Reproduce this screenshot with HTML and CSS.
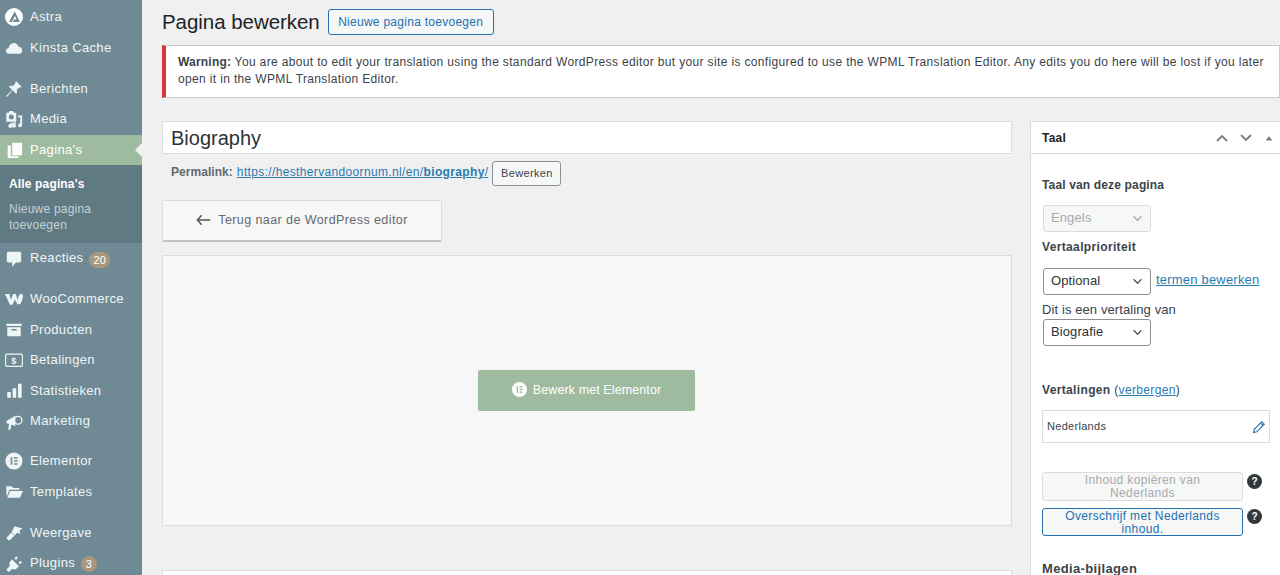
FILE: index.html
```html
<!DOCTYPE html>
<html lang="nl">
<head>
<meta charset="utf-8">
<title>Pagina bewerken</title>
<link rel="stylesheet" href="styles.css">
</head>
<body>
<div class="app">
  <nav class="sidebar">
    <a class="item"><svg class="ic" viewBox="0 0 20 20"><circle cx="10" cy="10" r="10" fill="#fff"/><path d="M10.800 3.500 4.500 15.500h3.200l3.300-6.500 1.800 3.800H10l-1.300 2.700h7.800z" fill="#6f8a94"/></svg><span>Astra</span></a>
    <a class="item"><svg class="ic" viewBox="0 0 20 20"><path d="M4.500 16.500C2 16.500 1 14.800 1 13.300c0-1.800 1.300-3 3-3.300C4.600 7 6.800 4.500 9.800 4.500c2.500 0 4.500 1.600 5.200 4 2.400 0 4.200 1.900 4.200 4.200 0 2.200-1.500 3.800-3.500 3.800z" fill="#eef5f7"/></svg><span>Kinsta Cache</span></a>
    <div class="sep"></div>
    <a class="item"><svg class="ic" viewBox="0 0 20 20"><path d="M12.500 1.500l6 6-1.500 1-1-.5-3 3c.5 2 .2 3.200-.5 4.500L8.500 11.500 2.500 18.500l-1 0 0-1 6.500-6.500-3.800-3.800c1.300-.8 2.800-1 4.500-.5l3-3-.5-1z" fill="#eef5f7"/></svg><span>Berichten</span></a>
    <a class="item"><svg class="ic" viewBox="0 0 20 20"><path d="M1.500 3h2.500l1-2h4l1 2h2.500v10h-11z M7 5a2.800 2.800 0 1 0 .01 0z" fill="#eef5f7" fill-rule="evenodd"/><path d="M14.500 6h4.500v11a2.200 2.200 0 1 1-2-2.200V8h-2.500zM6 14.500l6-1v4a2.200 2.200 0 1 1-2-2.200v-.300l-2 .300v2.500a2.200 2.200 0 1 1-2-2.200z" fill="#eef5f7"/></svg><span>Media</span></a>
    <a class="item active"><svg class="ic" viewBox="0 0 20 20"><path d="M8 2h11v14H8z" fill="#fff"/><path d="M3 5h3.500v12H15v2H3z" fill="#fff"/></svg><span>Pagina's</span></a>
    <div class="submenu">
      <a class="sub current">Alle pagina's</a>
      <a class="sub">Nieuwe pagina toevoegen</a>
    </div>
    <a class="item"><svg class="ic" viewBox="0 0 20 20"><path d="M4 2h12a2 2 0 0 1 2 2v8a2 2 0 0 1-2 2h-4l-4 5v-5H4a2 2 0 0 1-2-2V4a2 2 0 0 1 2-2z" fill="#eef5f7"/></svg><span>Reacties</span><b class="badge wide">20</b></a>
    <div class="sep short"></div>
    <a class="item"><svg class="ic" viewBox="0 0 20 20"><path d="M0 4.500h5l1.500 6.500L9 4.500h3l2 6.500 1-3.500c.6-2 1.700-3.200 3-3.200 1.400 0 2 1 2 2.500 0 2.500-1.700 7.500-3.200 9h-3L11 10.500l-2.500 5.800H5.500z" fill="#eef5f7"/></svg><span>WooCommerce</span></a>
    <a class="item"><svg class="ic" viewBox="0 0 20 20"><path d="M1.500 3h17v2.500h-17zM2.500 7h15v10h-15z M7 9v1.500h6V9z" fill="#eef5f7" fill-rule="evenodd"/></svg><span>Producten</span></a>
    <a class="item"><svg class="ic" viewBox="0 0 20 20"><rect x=".7" y="3.500" width="18.600" height="13.500" rx="1" fill="none" stroke="#eef5f7" stroke-width="1.300"/><text class="dollar" x="10" y="14.300" text-anchor="middle">$</text></svg><span>Betalingen</span></a>
    <a class="item"><svg class="ic" viewBox="0 0 20 20"><path d="M2.500 11h4v6.500h-4zM8.500 7h4v10.500h-4zM14.500 2h4v15.500h-4z" fill="#eef5f7"/></svg><span>Statistieken</span></a>
    <a class="item"><svg class="ic" viewBox="0 0 20 20"><path d="M1.500 9l10-6v11.500l-4.500-1.500-1 5.500H3.500l1-6.300-3-1z" fill="#eef5f7"/><circle cx="14.500" cy="8" r="4.300" fill="none" stroke="#eef5f7" stroke-width="1.500"/></svg><span>Marketing</span></a>
    <div class="sep tight"></div>
    <a class="item"><svg class="ic" viewBox="0 0 20 20"><circle cx="10" cy="10" r="9.500" fill="#eef5f7"/><path d="M6.300 5.800h1.800v8.400H6.300zM10 5.800h4v1.700h-4zM10 9.200h4v1.700h-4zM10 12.500h4v1.700h-4z" fill="#6f8a94"/></svg><span>Elementor</span></a>
    <a class="item"><svg class="ic" viewBox="0 0 20 20"><path d="M1.500 3.500h6l1.500 2h7v2H5L2.500 14h-1zM5.800 9H20l-3.500 7.500H2.500z" fill="#eef5f7"/></svg><span>Templates</span></a>
    <div class="sep"></div>
    <a class="item"><svg class="ic" viewBox="0 0 20 20"><path d="M10.500 2.500l9 2.500-3.500 2.500 1 3.500-3.500-1.200-2.500 3-3.500-3.500z M7 9.500l3.500 3.500-6 5.500L1.500 15.500z" fill="#eef5f7"/></svg><span>Weergave</span></a>
    <a class="item"><svg class="ic" viewBox="0 0 20 20"><path d="M8 5l7.500 7.500-2.500 2.500c-1.500 1.300-3.500 1.300-5 .5L4 19l-2.500-2.500 4-4.500c-.8-1.500-.6-3.500.5-5zM10.500 4l2-2.500 1.700 1.500-2 2.500zM15 8.500l2.500-2 1.500 1.700-2.500 2z" fill="#eef5f7"/></svg><span>Plugins</span><b class="badge">3</b></a>
  </nav>

  <main class="content">
    <header class="page-head">
      <h1>Pagina bewerken</h1>
      <a class="btn-add">Nieuwe pagina toevoegen</a>
    </header>
    <div class="notice">
      <p><strong>Warning:</strong> You are about to edit your translation using the standard WordPress editor but your site is configured to use the WPML Translation Editor. Any edits you do here will be lost if you later open it in the WPML Translation Editor.</p>
    </div>
    <div class="columns">
      <section class="editor">
        <div class="title-input">Biography</div>
        <div class="permalink">
          <strong>Permalink:</strong>
          <a class="link">https://hesthervandoornum.nl/en/<b>biography</b>/</a>
          <span class="btn-small">Bewerken</span>
        </div>
        <a class="btn-back"><svg class="arrow" viewBox="0 0 16 12"><path d="M6 1 1.500 6 6 11M1.500 6H15" fill="none" stroke="#50575e" stroke-width="1.600"/></svg>Terug naar de WordPress editor</a>
        <div class="elementor-panel">
          <a class="btn-elementor"><svg class="el-ic" viewBox="0 0 20 20"><circle cx="10" cy="10" r="10" fill="#fff"/><path d="M6.200 5.500h1.800v9H6.200zM10 5.500h4v1.700h-4zM10 9.100h4v1.800h-4zM10 12.800h4v1.700h-4z" fill="#9fbb9f"/></svg>Bewerk met Elementor</a>
        </div>
        <div class="next-box"></div>
      </section>

      <aside class="side">
        <div class="side-head">
          <h2>Taal</h2>
          <svg class="ctl" viewBox="0 0 14 14"><path d="M2 10l5-5 5 5" fill="none" stroke="#787c82" stroke-width="1.800"/></svg>
          <svg class="ctl" viewBox="0 0 14 14"><path d="M2 4l5 5 5-5" fill="none" stroke="#787c82" stroke-width="1.800"/></svg>
          <svg class="ctl small" viewBox="0 0 14 14"><path d="M3 10l4-5 4 5z" fill="#787c82"/></svg>
        </div>
        <div class="side-body">
          <p class="lab first">Taal van deze pagina</p>
          <div class="select disabled">Engels<svg class="chev" viewBox="0 0 12 8"><path d="M1.500 1.500 6 6l4.500-4.500" fill="none" stroke="#a7aaad" stroke-width="1.500"/></svg></div>
          <p class="lab second">Vertaalprioriteit</p>
          <div class="row">
            <div class="select">Optional<svg class="chev" viewBox="0 0 12 8"><path d="M1.500 1.500 6 6l4.500-4.500" fill="none" stroke="#50575e" stroke-width="1.500"/></svg></div>
            <a class="link terms">termen bewerken</a>
          </div>
          <p class="plain">Dit is een vertaling van</p>
          <div class="select">Biografie<svg class="chev" viewBox="0 0 12 8"><path d="M1.500 1.500 6 6l4.500-4.500" fill="none" stroke="#50575e" stroke-width="1.500"/></svg></div>
          <p class="lab trans"><strong>Vertalingen</strong> (<a class="link">verbergen</a>)</p>
          <div class="lang-box">Nederlands<svg class="pencil" viewBox="0 0 14 14"><path d="M1.500 12.500l.7-3.200L9.800 1.700l2.500 2.500-7.600 7.600zM8.500 3l2.500 2.500" fill="none" stroke="#2271b1" stroke-width="1.100"/></svg></div>
          <div class="act first-act"><div class="btn-wide off">Inhoud kopiëren van Nederlands</div><span class="help">?</span></div>
          <div class="act"><div class="btn-wide on">Overschrijf met Nederlands inhoud.</div><span class="help">?</span></div>
          <p class="lab media">Media-bijlagen</p>
        </div>
      </aside>
    </div>
  </main>
</div>
</body>
</html>
```
FILE: styles.css
```css
* { box-sizing: border-box; }
html, body { margin: 0; height: 575px; overflow: hidden; }
body {
  background: #f0f0f0;
  color: #3c434a;
  font: 13px/1.4 "Liberation Sans", Arial, sans-serif;
  letter-spacing: .35px;
}
p, h1, h2 { margin: 0; }
.app { display: flex; height: 575px; overflow: hidden; }

/* sidebar */
.sidebar {
  flex: 0 0 142px;
  background: #6f8a94;
  color: #f0f5f7;
  padding-top: 2px;
  overflow: hidden;
}
.item {
  position: relative;
  display: flex;
  align-items: center;
  height: 30.600px;
  padding-left: 5px;
  font-size: 13px;
  white-space: nowrap;
}
.ic { width: 18px; height: 18px; flex: none; margin-right: 7px; }
.sep { height: 10.300px; }
.sep.short { height: 10px; }
.sep.tight { height: 9.300px; }
.item.active { background: #9fbb9f; color: #fff; }
.item.active::after {
  content: "";
  position: absolute;
  right: 0;
  top: 8px;
  border: 7px solid transparent;
  border-right-color: #f0f0f0;
  border-left-width: 0;
}
.submenu { background: #5f7a82; padding: 11px 0 10px; height: 78px; }
.sub { display: block; padding: 0 9px; font-size: 12px; line-height: 16px; color: #c5d2d6; letter-spacing: .22px; }
.sub.current { color: #fff; font-weight: 700; margin-bottom: 9px; letter-spacing: .15px; }
.badge {
  display: inline-block;
  min-width: 16px;
  height: 16px;
  margin-left: 6px;
  padding: 0 4px;
  border-radius: 8px;
  background: #a8977f;
  color: #fff;
  font: 400 11px/16px "Liberation Sans", Arial, sans-serif;
  text-align: center;
}
.badge.wide { margin-top: 2px; }
.dollar { font: 700 10px "Liberation Sans", Arial, sans-serif; fill: #eef5f7; }

/* main */
.content { flex: 1; min-width: 0; padding-left: 20px; }
.page-head { display: flex; align-items: center; height: 45px; }
h1 { font-size: 20.500px; font-weight: 400; color: #1d2327; letter-spacing: -.05px; margin-right: 8px; }
.btn-add {
  display: flex;
  align-items: center;
  justify-content: center;
  width: 166px;
  height: 26px;
  border: 1px solid #2271b1;
  border-radius: 3px;
  background: #f6f7f7;
  color: #2271b1;
  font-size: 12px;
  letter-spacing: .27px;
  margin-bottom: 1px;
}
.notice {
  height: 53px;
  background: #fff;
  border: 1px solid #c9cccf;
  border-left: 4px solid #d63638;
  padding: 8px 6px 0 12px;
  font-size: 12px;
  line-height: 17px;
  letter-spacing: .35px;
}
.notice strong { letter-spacing: .2px; }
.columns { display: flex; margin-top: 23px; gap: 18px; }
.editor { flex: 0 0 850px; }
.title-input {
  height: 33px;
  background: #fff;
  border: 1px solid #dcdcde;
  padding: 1px 8px 0;
  font-size: 20px;
  line-height: 31px;
  color: #2c3338;
  letter-spacing: 0;
}
.permalink {
  display: flex;
  align-items: flex-start;
  height: 25px;
  margin-top: 7px;
  padding-left: 9px;
  font-size: 12px;
  line-height: 22px;
  color: #646970;
}
.permalink strong { margin-right: 4px; letter-spacing: .05px; }
.link { color: #2a7bb0; text-decoration: underline; }
.btn-small {
  margin-left: 4px;
  width: 69px;
  height: 25px;
  border: 1px solid #8c9196;
  border-radius: 3px;
  background: #f6f7f7;
  color: #3c434a;
  font-size: 11px;
  line-height: 23px;
  text-align: center;
}
.btn-back {
  display: flex;
  align-items: center;
  justify-content: center;
  width: 280px;
  height: 42px;
  margin-top: 14px;
  padding-top: 1px;
  background: #f7f7f7;
  border: 1px solid #dcdcde;
  border-bottom: 2px solid #c3c4c7;
  border-radius: 2px;
  color: #646970;
  font-size: 12.500px;
  letter-spacing: .42px;
}
.arrow { width: 15px; height: 12px; margin-right: 7px; margin-top: -3px; }
.elementor-panel {
  display: flex;
  align-items: center;
  justify-content: center;
  height: 271px;
  margin-top: 13px;
  padding-right: 1px;
  background: #f7f7f7;
  border: 1px solid #dcdcde;
}
.btn-elementor {
  display: flex;
  align-items: center;
  justify-content: center;
  width: 217px;
  height: 41px;
  background: #9fbb9f;
  border-radius: 2px;
  color: #fff;
  font-size: 12.500px;
  letter-spacing: .1px;
}
.el-ic { width: 15px; height: 15px; margin-right: 6px; margin-top: -2px; }
.next-box { height: 30px; margin-top: 44px; background: #fff; border: 1px solid #dcdcde; }

/* side */
.side { flex: 0 0 262px; background: #fff; border: 1px solid #dcdcde; height: 460px; }
.side-head {
  display: flex;
  align-items: center;
  height: 32px;
  padding-left: 11px;
  border-bottom: 1px solid #dcdcde;
}
.side-head h2 { flex: 1; font-size: 12px; font-weight: 700; color: #1d2327; letter-spacing: .2px; margin-top: 1px; }
.ctl { width: 14px; height: 14px; margin-right: 10px; }
.ctl.small { margin-right: 16px; width: 12px; height: 12px; }
.side-body { padding: 0 0 0 11px; font-size: 12px; }
.lab { font-weight: 700; color: #3c434a; line-height: 16px; }
.lab strong { font-weight: 700; }
.lab.first { margin-top: 23px; margin-bottom: 12px; letter-spacing: .15px; }
.lab.second { margin-top: 7px; margin-bottom: 13px; }
.select {
  display: flex;
  align-items: center;
  justify-content: space-between;
  width: 108px;
  height: 27px;
  margin-left: 1px;
  padding: 0 7px;
  border: 1px solid #8c8f94;
  border-radius: 3px;
  background: #fff;
  color: #2c3338;
  font-size: 13px;
  letter-spacing: .1px;
}
.select.disabled { background: #f6f7f7; border-color: #dcdcde; color: #a7aaad; }
.chev { width: 11px; height: 7px; }
.row { display: flex; align-items: center; gap: 5px; }
.terms { margin-top: -3px; font-size: 13px; letter-spacing: .2px; }
.plain { margin-top: 7px; line-height: 16px; margin-bottom: 1px; font-size: 13px; letter-spacing: .1px; }
.lab.trans { margin-top: 36px; font-weight: 400; }
.lang-box {
  display: flex;
  align-items: center;
  justify-content: space-between;
  width: 228px;
  height: 33px;
  margin-top: 12px;
  padding: 1px 3px 0 4px;
  border: 1px solid #dcdcde;
  font-size: 11px;
  letter-spacing: .3px;
}
.pencil { width: 14px; height: 14px; }
.act { display: flex; align-items: flex-start; gap: 3px; margin-top: 7px; }
.first-act { margin-top: 29px; }
.first-act .help { margin-top: 2px; }
.btn-wide {
  width: 201px;
  height: 29px;
  border: 1px solid #dcdcde;
  border-radius: 3px;
  background: #f6f7f7;
  font-size: 12px;
  line-height: 13px;
  text-align: center;
  padding: 1px 16px 0;
}
.btn-wide.off { color: #a7aaad; }
.btn-wide.on { color: #2271b1; border-color: #2271b1; height: 28px; }
.help {
  width: 15px;
  height: 15px;
  margin: 1px 0 0 1px;
  border-radius: 50%;
  background: #32373c;
  color: #fff;
  font-size: 10px;
  font-weight: 700;
  line-height: 15px;
  text-align: center;
  letter-spacing: 0;
}
.lab.media { margin-top: 25px; font-size: 13px; }
```
